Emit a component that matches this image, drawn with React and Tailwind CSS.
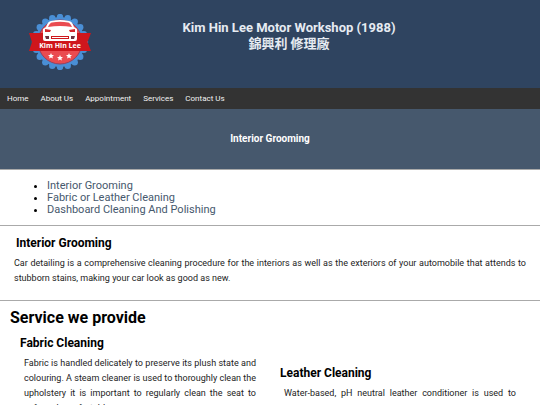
import React from 'react';

const navLinks = ['Home', 'About Us', 'Appointment', 'Services', 'Contact Us'];

const topics = [
    'Interior Grooming',
    'Fabric or Leather Cleaning',
    'Dashboard Cleaning And Polishing',
];

const sealTeeth = Array.from({ length: 20 }, (_, i) => {
    const angle = (i * Math.PI) / 10;
    return { cx: 31 + 25 * Math.cos(angle), cy: 28 + 25 * Math.sin(angle) };
});

const Star = ({ x, y }) => (
    <path
        transform={`translate(${x} ${y})`}
        d="M0 -3 L0.9 -1 L3 -0.9 L1.4 0.5 L1.9 2.6 L0 1.5 L-1.9 2.6 L-1.4 0.5 L-3 -0.9 L-0.9 -1 Z"
        fill="#fff"
    />
);

const Logo = () => (
    <svg viewBox="0 0 62 56" className="w-[62px] h-14" role="img" aria-label="Kim Hin Lee">
        {sealTeeth.map((t, i) => (
            <circle key={i} cx={t.cx} cy={t.cy} r="3.2" fill="#4a8fd6" />
        ))}
        <circle cx="31" cy="28" r="25" fill="#4a8fd6" />
        <circle cx="31" cy="28" r="22" fill="#ea4b50" stroke="#983f5c" strokeWidth="1" />
        <path d="M0 19 H62 L58.5 28 L62 37 H0 L3 28 Z" fill="#cf161c" />
        {/* car front: roof, windscreen, bonnet, lamps, grille */}
        <path d="M17 13 Q19 7 22 7 Q31 5 40 7 Q43 7 45 13 L48 15 V25 Q48 27 46 27 H16 Q14 27 14 25 V15 Z" fill="#fff" />
        <path d="M19 13 Q21 8.5 23 8.5 Q31 7 39 8.5 Q41 8.5 43 13 Q31 11 19 13 Z" fill="#ea4b50" />
        <path d="M16 15 L22 16 L21 18 L16 18 Z M46 15 L40 16 L41 18 L46 18 Z" fill="#d3262b" />
        <path d="M22 22 H40 V25 H22 Z" fill="#cf161c" />
        <path d="M16 22 H20 V25 H17 Z M42 22 H46 L45 25 H42 Z" fill="#6b3140" />
        <path d="M23 23.5 H39" stroke="#fff" strokeWidth="1" />
        <text x="31" y="34" textAnchor="middle" fontSize="7" fontWeight="700" fill="#fff" className="font-['Open_Sans',sans-serif]">
            Kim Hin Lee
        </text>
        <Star x={22} y={42} />
        <Star x={31} y={44} />
        <Star x={40} y={42} />
    </svg>
);

const Service = ({ title, children }) => (
    <article className="w-1/2">
        <h3 className="px-[10px] text-xs leading-4 font-bold">{title}</h3>
        <p className="mt-[5px] px-[14px] text-[9px] leading-[15px] text-justify text-[#222]">{children}</p>
    </article>
);

const App = () => {
    return (
        <div className="bg-white text-black font-['Roboto','Noto_Sans_CJK_TC',sans-serif]">
            <header className="flex h-[88px] bg-[#2f4460] pt-[14px]">
                <div className="w-[120px] pl-[29px]">
                    <Logo />
                </div>
                <h1 className="grow pt-[6px] pr-[82px] text-center text-[13px] leading-4 font-bold text-[#e6ebf2]">
                    Kim Hin Lee Motor Workshop (1988)
                    <br />
                    錦興利 修理廠
                </h1>
            </header>
            <nav className="flex h-[21px] items-center gap-3 bg-[#333] px-[7px]">
                {navLinks.map((link) => (
                    <a key={link} href="#" className="text-[8px] leading-3 text-[#f2f2f2]">{link}</a>
                ))}
            </nav>
            <div className="flex h-[60px] items-center justify-center bg-[#46586d]">
                <h2 className="text-[10px] leading-4 font-bold text-white">Interior Grooming</h2>
            </div>
            <main>
                <ul className="list-disc border-t border-[#aaa] pt-[10px] pb-[9px] pl-[47px] text-[11px] leading-3">
                    {topics.map((topic) => (
                        <li key={topic}><a href="#" className="text-[#46586d]">{topic}</a></li>
                    ))}
                </ul>
                <section className="border-t border-[#aaa] px-[14px] pt-[9px] pb-[14px]">
                    <h3 className="px-[2px] text-xs leading-4 font-bold">Interior Grooming</h3>
                    <p className="mt-[5px] text-[9px] leading-[15px] text-justify text-[#222]">
                        Car detailing is a comprehensive cleaning procedure for the interiors as well as the exteriors of your automobile that attends to stubborn stains, making your car look as good as new.
                    </p>
                </section>
                <section className="border-t border-[#aaa] px-[10px] pt-[7px] pb-4">
                    <h2 className="text-base leading-5 font-bold">Service we provide</h2>
                    <div className="mt-[7px] flex items-end">
                        <Service title="Fabric Cleaning">
                            Fabric is handled delicately to preserve its plush state and colouring. A steam cleaner is used to thoroughly clean the upholstery it is important to regularly clean the seat to safe and comfortable.
                        </Service>
                        <Service title="Leather Cleaning">
                            Water-based, pH neutral leather conditioner is used to ease or remove any creases on worn areas.
                        </Service>
                    </div>
                </section>
            </main>
        </div>
    );
};

export default App;
